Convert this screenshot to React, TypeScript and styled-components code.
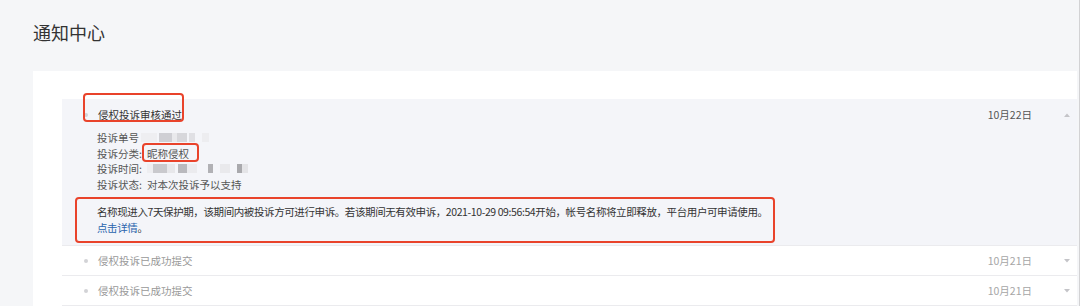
import styled, { createGlobalStyle } from "styled-components";

const GlobalStyle = createGlobalStyle`
  body {
    margin: 0;
    background: #f5f6f8;
    font-family: "Noto Sans CJK SC", "Noto Sans", sans-serif;
  }
`;

const Page = styled.div`
  width: 1080px;
  height: 306px;
  box-sizing: border-box;
  padding-right: 2px;
  border-right: 1px solid #d2d2d4;
  overflow: hidden;
`;

const PageTitle = styled.h1`
  margin: 0;
  padding: 22px 0 0 33px;
  font-size: 18px;
  line-height: 20px;
  font-weight: normal;
  color: #333;
`;

const Panel = styled.div`
  margin: 29px 0 0 33px;
  padding: 28px 0 0 29px;
  background: #fff;
  height: 240px;
`;

const Item = styled.div<{ $open?: boolean }>`
  background: ${(p) => (p.$open ? "#f4f5f9" : "#fff")};
  border-bottom: 1px solid #ebebee;
  padding-bottom: ${(p) => (p.$open ? "2px" : "0")};
`;

const ItemHead = styled.div<{ $open?: boolean }>`
  display: flex;
  align-items: center;
  height: ${(p) => (p.$open ? "31px" : "29px")};
  padding-left: 22px;
  font-size: 10.5px;
  color: ${(p) => (p.$open ? "#333" : "#999")};
`;

const Marked = styled.span<{ $t: number; $r: number; $b: number; $l: number }>`
  position: relative;
  display: inline-flex;
  align-items: center;
  &::after {
    content: "";
    position: absolute;
    top: ${(p) => p.$t}px;
    right: ${(p) => p.$r}px;
    bottom: ${(p) => p.$b}px;
    left: ${(p) => p.$l}px;
    border: 2px solid #e9432b;
    border-radius: 4px;
  }
`;

const Dot = styled.span`
  width: 4px;
  height: 4px;
  border-radius: 50%;
  background: #d2d3d6;
  margin-right: 10px;
`;

const HeadTitle = styled.span`
  line-height: 16px;
`;

const DateText = styled.span<{ $muted?: boolean }>`
  margin-left: auto;
  color: ${(p) => (p.$muted ? "#a6a6a6" : "#555")};
`;

const Caret = styled.span`
  width: 20px;
  margin-left: 25px;
  display: flex;
  justify-content: center;
`;

const Details = styled.div`
  padding-left: 35px;
  font-size: 10.5px;
  line-height: 15.5px;
  color: #555;
`;

const DetailRow = styled.div`
  display: flex;
  align-items: center;
`;

const Label = styled.span<{ $w: number }>`
  width: ${(p) => p.$w}px;
`;

const Mosaic = styled.span`
  display: flex;
  height: 9px;
  align-items: stretch;
`;

const Cell = styled.span<{ $w: number; $c: string }>`
  width: ${(p) => p.$w}px;
  background: ${(p) => p.$c};
`;

const Notice = styled.div`
  margin: 5px 0 0 13px;
  width: 700px;
  height: 46px;
  box-sizing: border-box;
  padding: 5px 0 0 20px;
  border: 2px solid #e9432b;
  border-radius: 4px;
  font-size: 10.5px;
  line-height: 16px;
  letter-spacing: -0.4px;
  color: #333;
  white-space: nowrap;
`;

const Link = styled.a`
  color: #2a64ad;
  text-decoration: none;
`;

type MosaicCell = [number, string];

const idCells: MosaicCell[] = [
  [2, "transparent"],
  [16, "#eeeef1"],
  [2, "transparent"],
  [13, "#cfcfd4"],
  [5, "#e9e9ec"],
  [10, "#d7d7db"],
  [2, "transparent"],
  [6, "#e0e0e4"],
  [7, "transparent"],
  [7, "#ededf0"],
];

const timeCells: MosaicCell[] = [
  [6, "#eeeef1"],
  [14, "#c9c9cd"],
  [8, "#e7e7ea"],
  [3, "transparent"],
  [9, "#b9b9bd"],
  [10, "#ebebee"],
  [11, "transparent"],
  [5, "#b1b1b5"],
  [7, "transparent"],
  [10, "#e9e9ec"],
  [7, "transparent"],
  [5, "#a9a9ad"],
  [6, "#e4e4e7"],
];

function Blur({ cells }: { cells: MosaicCell[] }) {
  return (
    <Mosaic>
      {cells.map(([w, c], i) => (
        <Cell key={i} $w={w} $c={c} />
      ))}
    </Mosaic>
  );
}

function CaretIcon({ up }: { up?: boolean }) {
  return (
    <Caret>
      <svg width="6" height="4" viewBox="0 0 6 4">
        <polygon points={up ? "0,4 3,0.5 6,4" : "0,0 6,0 3,3.5"} fill="#c4c4c8" />
      </svg>
    </Caret>
  );
}

function CollapsedItem({ title, date }: { title: string; date: string }) {
  return (
    <Item>
      <ItemHead>
        <Dot />
        <HeadTitle>{title}</HeadTitle>
        <DateText $muted>{date}</DateText>
        <CaretIcon />
      </ItemHead>
    </Item>
  );
}

export default function App() {
  return (
    <Page>
      <GlobalStyle />
      <PageTitle>通知中心</PageTitle>
      <Panel>
        <Item $open>
          <ItemHead $open>
            <Marked $t={-14} $r={-2} $b={1} $l={-1}>
              <Dot />
              <HeadTitle>侵权投诉审核通过</HeadTitle>
            </Marked>
            <DateText>10月22日</DateText>
            <CaretIcon up />
          </ItemHead>
          <Details>
            <DetailRow>
              <Label $w={42}>投诉单号</Label>
              <Blur cells={idCells} />
            </DetailRow>
            <DetailRow>
              <Label $w={50}>投诉分类:</Label>
              <Marked $t={-3} $r={-10} $b={-1} $l={-5}>
                昵称侵权
              </Marked>
            </DetailRow>
            <DetailRow>
              <Label $w={50}>投诉时间:</Label>
              <Blur cells={timeCells} />
            </DetailRow>
            <DetailRow>
              <Label $w={50}>投诉状态:</Label>
              <span>对本次投诉予以支持</span>
            </DetailRow>
          </Details>
          <Notice>
            名称现进入7天保护期，该期间内被投诉方可进行申诉。若该期间无有效申诉，2021-10-29 09:56:54开始，帐号名称将立即释放，平台用户可申请使用。
            <br />
            <Link href="#">点击详情</Link>。
          </Notice>
        </Item>
        <CollapsedItem title="侵权投诉已成功提交" date="10月21日" />
        <CollapsedItem title="侵权投诉已成功提交" date="10月21日" />
      </Panel>
    </Page>
  );
}
